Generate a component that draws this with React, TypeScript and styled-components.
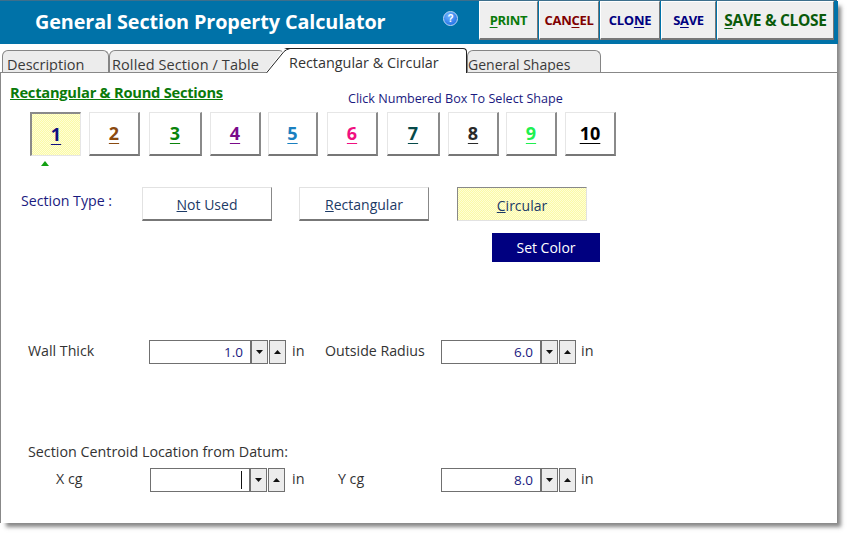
import React from "react";
import styled, { createGlobalStyle, css } from "styled-components";

const Global = createGlobalStyle`
  html, body { margin: 0; padding: 0; background: #fff; width: 853px; height: 539px; overflow: hidden; }
  body { font-family: "Open Sans", "Noto Sans", "Liberation Sans", sans-serif; color: #333; }
`;

const dither = css`
  background: repeating-conic-gradient(#fbfaa6 0 25%, #fefed6 0 50%) 0 0 / 2px 2px;
`;

const Windowed = styled.div`
  width: 837px; height: 523px; display: flex; flex-direction: column; background: #fff;
  box-shadow: 5px 5px 4px -1px rgba(70,70,70,.65); border-top: 1px solid #3d6f8c; box-sizing: border-box;
`;
const Header = styled.header`
  height: 43px; flex: none; background: #0072a8; display: flex; align-items: flex-start; padding-left: 35px; width: 838px; box-sizing: border-box;
`;
const Title = styled.h1`
  margin: 5px 0 0; width: 408px; font-size: 19.8px; line-height: 32px; font-weight: 700; color: #fff; white-space: nowrap; letter-spacing: -.1px;
`;
const Help = styled.span`
  width: 13px; height: 13px; margin-top: 10px; border-radius: 50%; background: radial-gradient(circle at 40% 30%, #6fb6ff, #1060e0);
  border: 1px solid #bcd9f5; color: #fff; font: 700 10px/13px "Liberation Sans", sans-serif; text-align: center;
`;
const Actions = styled.div`
  display: flex; gap: 1px; margin-left: 21px; height: 39px;
`;
const ActionBtn = styled.button<{ $w: number; $c: string; $size?: number }>`
  width: ${p => p.$w}px; height: 39px; padding: 0; background: #efefef; color: ${p => p.$c};
  border: 1px solid #fff; border-right-color: #777; border-bottom-color: #777; border-right-width: 1px; border-bottom-width: 2px;
  font-family: inherit; font-weight: 700; font-size: ${p => p.$size ?? 13}px; white-space: nowrap; letter-spacing: -.3px;
  u { text-decoration-thickness: 1px; text-underline-offset: 2px; }
`;
const TabStrip = styled.nav`
  height: 28px; flex: none; display: flex; align-items: flex-end; padding-left: 2px; position: relative;
`;
const Tab = styled.div<{ $w: number; $pl: number; $fs?: number; $ls?: number }>`
  width: ${p => p.$w}px; height: 22px; box-sizing: border-box; background: #ececec; border: 1px solid #858585; border-bottom: 0;
  border-radius: 6px 6px 0 0; font-size: ${p => p.$fs ?? 14.5}px; letter-spacing: ${p => p.$ls ?? 0}px; line-height: 28px; padding-left: ${p => p.$pl}px; color: #3a3a3a; white-space: nowrap; overflow: hidden;
`;
const ActiveTab = styled.div`
  width: 201px; height: 25px; box-sizing: border-box; position: relative; z-index: 1; background: #fff; margin: 0 0 -1px -19px;
  font-size: 14.4px; line-height: 28px; padding-left: 23px; color: #333; white-space: nowrap;
  border-top: 1px solid #222; border-right: 1px solid #222; border-radius: 0 4px 0 0;
  clip-path: polygon(-1px 100%, 18px 1px, 23px -1px, 100% -1px, 100% 100%);
  svg { position: absolute; left: 0; top: -1px; }
`;
const Panel = styled.main`
  flex: 1; box-sizing: border-box; border: 1px solid #888; border-bottom: 0; padding: 0 0 0 9px; display: flex; flex-direction: column; width: 838px;
`;
const TopLine = styled.div`
  display: flex; height: 39px;
`;
const SectionTitle = styled.h2`
  margin: 9px 0 0; width: 338px; font-size: 14.7px; line-height: 20px; font-weight: 700; color: #0a7a0a; text-decoration: underline; letter-spacing: -.25px; white-space: nowrap;
`;
const Hint = styled.p`
  margin: 17px 0 0 0; font-size: 12.6px; line-height: 18px; color: #1a1a80; white-space: nowrap;
`;
const Shapes = styled.div`
  display: flex; margin-left: 20px; height: 44px;
`;
const ShapeBtn = styled.button<{ $w: number; $x: number; $c: string; $on?: boolean }>`
  width: ${p => p.$w}px; height: 44px; margin-right: ${p => p.$x}px; padding: 0 0 2px; box-sizing: border-box; flex: none;
  background: #fff; color: ${p => p.$c};
  border: 1px solid #e6e6e6; border-width: 1px 2px 2px 1px; border-right-color: #8a8a8a; border-bottom-color: #777;
  ${p => p.$on && css`${dither} border-color:#8a8a8a #e6e6e6 #e6e6e6 #8a8a8a; border-width:2px 1px 1px 2px;`}
  font-family: inherit; font-weight: 700; font-size: 18px; text-decoration: underline; text-underline-offset: 3px;
`;
const Marker = styled.div`
  width: 0; height: 0; margin: 5px 0 0 31px; border: 4px solid transparent; border-top: 0; border-bottom: 5px solid #12a012;
`;
const TypeRow = styled.div`
  display: flex; align-items: flex-start; margin: 21px 0 0 11px; height: 34px;
`;
const TypeLabel = styled.span`
  width: 121px; font-size: 14.2px; line-height: 27px; color: #1a1a80; height: 27px; white-space: nowrap;
`;
const TypeBtn = styled.button<{ $on?: boolean; $gap: number }>`
  width: 130px; height: 34px; padding: 2px 0 0; margin-right: ${p => p.$gap}px; box-sizing: border-box; flex: none; font-family: inherit; font-size: 14px; color: #1c3a66;
  background: #fff; border: 1px solid #e2e2e2;
  ${p => (p.$on ? css`${dither} border-top-color:#888;border-left-color:#888;` : "border-right-color:#888;border-bottom-color:#777;border-bottom-width:2px;")}
`;
const ColorRow = styled.div`
  display: flex; margin: 12px 0 0 482px;
`;
const SetColor = styled.button`
  width: 108px; height: 29px; padding: 0; border: 0; background: #000080; color: #fff; font-family: inherit; font-size: 14px;
`;
const FieldRow = styled.div<{ $top: number }>`
  display: flex; align-items: center; height: 24px; margin-top: ${p => p.$top}px;
`;
const FieldLabel = styled.span<{ $w: number; $l?: number }>`
  width: ${p => p.$w}px; margin-left: ${p => p.$l ?? 0}px; flex: none; font-size: 14.2px; line-height: 20px; margin-bottom: 3px; color: #333; white-space: nowrap;
`;
const Value = styled.div<{ $w: number }>`
  width: ${p => p.$w}px; height: 24px; box-sizing: border-box; border: 1px solid #707070; text-align: right; padding-right: 7px; font-size: 13.5px; line-height: 23px; color: #1a1a80; background: #fff; position: relative;
`;
const Caret = styled.i`
  position: absolute; right: 7px; top: 2px; width: 1px; height: 18px; background: #111;
`;
const Spin = styled.button<{ $gap: number }>`
  width: 17px; height: 24px; margin-left: ${p => p.$gap}px; padding: 0; box-sizing: border-box; background: #ececec; border: 1px solid #707070; display: flex; align-items: center; justify-content: center;
  svg { display: block; }
`;
const Unit = styled.span<{ $l: number; $w?: number }>`
  margin: 0 0 3px ${p => p.$l}px; width: ${p => p.$w ?? 27}px; flex: none; font-size: 14.4px; color: #333;
`;
const CentroidNote = styled.p`
  margin: 78px 0 0 18px; font-size: 14.3px; line-height: 20px; color: #333; white-space: nowrap;
`;

const Down = () => <svg width="7" height="4" viewBox="0 0 7 4"><path d="M0 0h7L3.5 4z" fill="#111" /></svg>;
const Up = () => <svg width="7" height="4" viewBox="0 0 7 4"><path d="M0 4h7L3.5 0z" fill="#111" /></svg>;

const Field = ({ value, caret, w }: { value?: string; caret?: boolean; w: number }) => (
  <>
    <Value $w={w}>{value}{caret && <Caret />}</Value>
    <Spin $gap={0} aria-label="down"><Down /></Spin>
    <Spin $gap={1} aria-label="up"><Up /></Spin>
  </>
);

const shapes: [string, string, number, number][] = [
  ["1", "#101080", 51, 8], ["2", "#8a4a10", 51, 9], ["3", "#0a840a", 53, 8], ["4", "#7a0a8a", 51, 7], ["5", "#1a80c0", 50, 9],
  ["6", "#f01080", 51, 9], ["7", "#064a4a", 53, 8], ["8", "#2a2a2a", 51, 7], ["9", "#20f050", 51, 8], ["10", "#000", 51, 0],
];

export default function App() {
  return (
    <>
      <Global />
      <Windowed>
        <Header>
          <Title>General Section Property Calculator</Title>
          <Help>?</Help>
          <Actions>
            <ActionBtn $w={59} $c="#0a7a0a"><u>P</u>RINT</ActionBtn>
            <ActionBtn $w={60} $c="#800000">CAN<u>C</u>EL</ActionBtn>
            <ActionBtn $w={60} $c="#000080">CLO<u>N</u>E</ActionBtn>
            <ActionBtn $w={55} $c="#000080">S<u>A</u>VE</ActionBtn>
            <ActionBtn $w={117} $c="#0a5a0a" $size={15.5}><u>S</u>AVE &amp; CLOSE</ActionBtn>
          </Actions>
        </Header>
        <TabStrip>
          <Tab $w={107} $pl={4}>Description</Tab>
          <Tab $w={176} $pl={2} $ls={0.1}>Rolled Section / Table</Tab>
          <ActiveTab>
            <svg width="25" height="26" viewBox="0 0 25 26"><path d="M0 25.5 18 3.5Q20 1.5 24 .5" fill="none" stroke="#222" /></svg>
            Rectangular &amp; Circular
          </ActiveTab>
          <Tab $w={134} $pl={0} $fs={14}>General Shapes</Tab>
        </TabStrip>
        <Panel>
          <TopLine>
            <SectionTitle>Rectangular &amp; Round Sections</SectionTitle>
            <Hint>Click Numbered Box To Select Shape</Hint>
          </TopLine>
          <Shapes>
            {shapes.map(([n, c, w, g], i) => <ShapeBtn key={n} $w={w} $x={g} $c={c} $on={i === 0}>{n}</ShapeBtn>)}
          </Shapes>
          <Marker />
          <TypeRow>
            <TypeLabel>Section Type :</TypeLabel>
            <TypeBtn $gap={27}><u>N</u>ot Used</TypeBtn>
            <TypeBtn $gap={28}><u>R</u>ectangular</TypeBtn>
            <TypeBtn $gap={0} $on><u>C</u>ircular</TypeBtn>
          </TypeRow>
          <ColorRow><SetColor>Set Color</SetColor></ColorRow>
          <FieldRow $top={78}>
            <FieldLabel $l={18} $w={121}>Wall Thick</FieldLabel>
            <Field w={102} value="1.0" />
            <Unit $l={6}>in</Unit>
            <FieldLabel $l={6} $w={116}>Outside Radius</FieldLabel>
            <Field w={100} value="6.0" />
            <Unit $l={5}>in</Unit>
          </FieldRow>
          <CentroidNote>Section Centroid Location from Datum:</CentroidNote>
          <FieldRow $top={6}>
            <FieldLabel $l={46} $w={94}>X cg</FieldLabel>
            <Field w={100} caret />
            <Unit $l={7}>in</Unit>
            <FieldLabel $l={19} $w={103}>Y cg</FieldLabel>
            <Field w={100} value="8.0" />
            <Unit $l={5}>in</Unit>
          </FieldRow>
        </Panel>
      </Windowed>
    </>
  );
}
